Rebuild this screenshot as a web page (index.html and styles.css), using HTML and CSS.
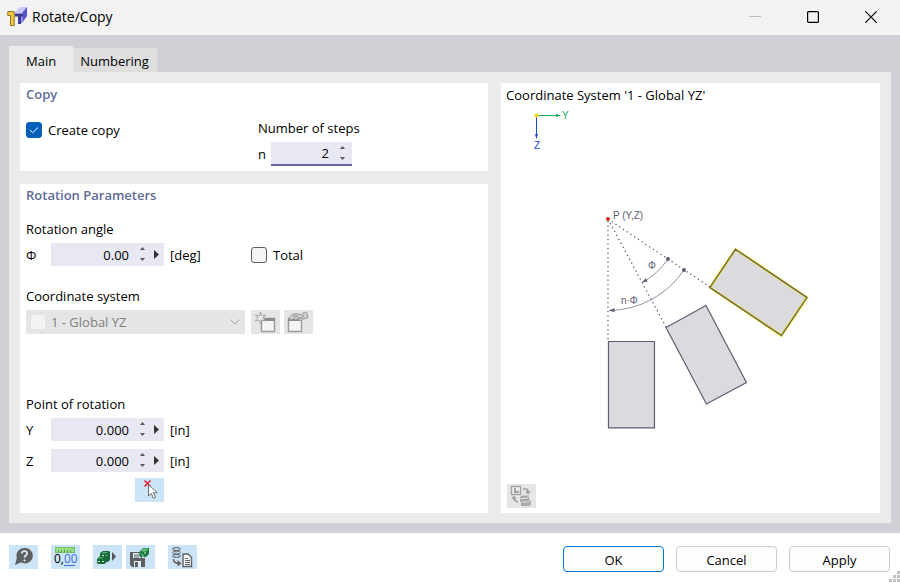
FILE: index.html
```
<!DOCTYPE html>
<html lang="en">
<head>
  <meta charset="UTF-8" />
  <title>Rotate/Copy</title>
  <meta name="viewport" content="width=device-width, initial-scale=1.0" />
  <link rel="stylesheet" href="styles.css">
</head>

<body>

  <header class="titlebar">
    <svg class="app-icon" viewBox="0 0 20 20" aria-hidden="true">
      <path d="M7 6l6-6h7l-4 6z" fill="#c9cbfa"/>
      <path d="M15 6l5-6v9l-5 7z" fill="#5353c8"/>
      <path d="M8 6h8v9l-3 2V9H8z" fill="#8f90f2"/>
      <path d="M8 7h8v2.500h-2V17h-3V9.500H8z" fill="#3c3c90"/>
      <path d="M.8 4.500h6.400V18.500H3.500V8.500H.8z" fill="#f3c83b" stroke="#8c762b"/>
    </svg>
    <h1 class="title">Rotate/Copy</h1>
    <div class="window-buttons">
      <button class="win-btn" aria-label="Minimize" disabled>
        <svg viewBox="0 0 12 12"><path d="M0 5.500h12" stroke="#bdbdbd"/></svg>
      </button>
      <button class="win-btn" aria-label="Maximize">
        <svg viewBox="0 0 12 12"><rect x=".6" y=".6" width="10.800" height="10.800" rx="1" fill="none" stroke="#000" stroke-width="1.200"/></svg>
      </button>
      <button class="win-btn" aria-label="Close">
        <svg viewBox="0 0 12 12"><path d="M.3.3l11.400 11.400M11.700.3L.3 11.700" stroke="#000" stroke-width="1.200"/></svg>
      </button>
    </div>
  </header>

  <main class="workspace">
    <div class="tabs" role="tablist">
      <button class="tab active" role="tab" aria-selected="true">Main</button>
      <button class="tab" role="tab" aria-selected="false">Numbering</button>
    </div>

    <div class="page" role="tabpanel">
      <div class="settings">

        <section class="panel">
          <h2 class="panel-title">Copy</h2>
          <div class="copy-row">
            <label class="check"><input type="checkbox" checked> Create copy</label>
            <div class="steps">
              <label class="caption" for="steps">Number of steps</label>
              <div class="line">
                <span class="symbol narrow">n</span>
                <div class="field short focused">
                  <input id="steps" type="text" inputmode="numeric" value="2">
                  <span class="spinner">
                    <button aria-label="More steps"><svg viewBox="0 0 5 3"><path d="M0 3L2.500 0 5 3z"/></svg></button>
                    <button aria-label="Fewer steps"><svg viewBox="0 0 5 3"><path d="M0 0l2.500 3L5 0z"/></svg></button>
                  </span>
                </div>
              </div>
            </div>
          </div>
        </section>

        <section class="panel grow">
          <h2 class="panel-title">Rotation Parameters</h2>

          <div class="group">
            <label class="caption" for="angle">Rotation angle</label>
            <div class="line">
              <span class="symbol">Φ</span>
              <div class="field">
                <input id="angle" type="text" inputmode="decimal" value="0.00">
                <span class="spinner">
                  <button aria-label="Increase angle"><svg viewBox="0 0 5 3"><path d="M0 3L2.500 0 5 3z"/></svg></button>
                  <button aria-label="Decrease angle"><svg viewBox="0 0 5 3"><path d="M0 0l2.500 3L5 0z"/></svg></button>
                </span>
                <button class="more" aria-label="Angle options"><svg viewBox="0 0 5 9"><path d="M0 0l5 4.500L0 9z"/></svg></button>
              </div>
              <span class="unit">[deg]</span>
              <label class="check"><input type="checkbox"> Total</label>
            </div>
          </div>

          <div class="group">
            <label class="caption" for="system">Coordinate system</label>
            <div class="line">
              <div class="combo">
                <span class="swatch"></span>
                <select id="system" disabled>
                  <option>1 - Global YZ</option>
                </select>
                <svg class="chevron" viewBox="0 0 10 6" aria-hidden="true"><path d="M.5.5L5 5 9.500.5" fill="none" stroke="#a3a3a3"/></svg>
              </div>
              <button class="tool off" aria-label="New coordinate system" disabled>
                <svg viewBox="0 0 29 24">
                  <rect x="10.500" y="8.500" width="13" height="13" fill="#f4f4f4" stroke="#999" stroke-width="1.400"/>
                  <path d="M10 8h14v3H10z" fill="#8c8c8c"/>
                  <path d="M9.500 2l1.200 4 4-1-2.700 3 2.700 3-4-1-1.200 4-1.200-4-4 1L7 8 4.300 5l4 1z" fill="#e9e9e9" stroke="#999" stroke-width=".8"/>
                </svg>
              </button>
              <button class="tool off" aria-label="Edit coordinate system" disabled>
                <svg viewBox="0 0 29 24">
                  <rect x="4.500" y="8.500" width="13" height="13" fill="#f4f4f4" stroke="#999" stroke-width="1.400"/>
                  <path d="M4 8h14v3H4z" fill="#8c8c8c"/>
                  <path d="M5 9c1-4 5-6 9-5l4 1 2-3 3 1 1 5-5 1-2 2-3-2-3 1-1-2-2 2z" fill="#cfcfcf" stroke="#999"/>
                  <path d="M9 6h5M13 8h5l2-3" fill="none" stroke="#8c8c8c"/>
                </svg>
              </button>
            </div>
          </div>

          <div class="group point">
            <h3 class="caption">Point of rotation</h3>
            <div class="line">
              <label class="symbol" for="point-y">Y</label>
              <div class="field">
                <input id="point-y" type="text" inputmode="decimal" value="0.000">
                <span class="spinner">
                  <button aria-label="Increase Y"><svg viewBox="0 0 5 3"><path d="M0 3L2.500 0 5 3z"/></svg></button>
                  <button aria-label="Decrease Y"><svg viewBox="0 0 5 3"><path d="M0 0l2.500 3L5 0z"/></svg></button>
                </span>
                <button class="more" aria-label="Y options"><svg viewBox="0 0 5 9"><path d="M0 0l5 4.500L0 9z"/></svg></button>
              </div>
              <span class="unit">[in]</span>
            </div>
            <div class="line second">
              <label class="symbol" for="point-z">Z</label>
              <div class="field">
                <input id="point-z" type="text" inputmode="decimal" value="0.000">
                <span class="spinner">
                  <button aria-label="Increase Z"><svg viewBox="0 0 5 3"><path d="M0 3L2.500 0 5 3z"/></svg></button>
                  <button aria-label="Decrease Z"><svg viewBox="0 0 5 3"><path d="M0 0l2.500 3L5 0z"/></svg></button>
                </span>
                <button class="more" aria-label="Z options"><svg viewBox="0 0 5 9"><path d="M0 0l5 4.500L0 9z"/></svg></button>
              </div>
              <span class="unit">[in]</span>
            </div>
            <div class="pick">
              <button class="tool" aria-label="Pick point in view">
                <svg viewBox="0 0 29 24">
                  <path d="M9.500 2.500l6 6M15.500 2.500l-6 6" stroke="#e8192c" stroke-width="1.500"/>
                  <path d="M13.500 6.500v11.500l2.800-2.500 2 4.800 2.200-1-2-4.600h3.700z" fill="#fff" stroke="#5f5f5f" stroke-width=".9"/>
                </svg>
              </button>
            </div>
          </div>
        </section>
      </div>

      <section class="panel preview">
        <h2 class="preview-title">Coordinate System '1 - Global YZ'</h2>

        <svg class="diagram" viewBox="0 1 379 377" role="img" aria-label="Object rotated around point P in n steps">
          <!-- axes -->
          <g stroke-width="1">
            <path d="M36 9.500h19" stroke="#12a85a"/>
            <path d="M55 8l5 1.500-5 1.500z" fill="#12a85a"/>
            <path d="M35.500 10v18" stroke="#1c46c8"/>
            <path d="M34 28l1.500 5 1.500-5z" fill="#1c46c8"/>
          </g>
          <circle cx="35.500" cy="9.500" r="2" fill="#f7d800"/>
          <text class="axis" x="61" y="13" fill="#12a85a">Y</text>
          <text class="axis" x="33" y="43" fill="#1c46c8">Z</text>

          <!-- bodies -->
          <g fill="#dbdbdf" stroke="#5d5b70" stroke-width="1.200">
            <path d="M107.500 235.500h46v86.500h-46z"/>
            <path d="M165 221.500l40-22 40.500 77-40 21.500z"/>
            <path d="M209 181.500l25.500-38.200 71.500 48.200-25.500 38z" stroke="#f4e000" stroke-width="2.400"/>
            <path d="M209 181.500l25.500-38.200 71.500 48.200-25.500 38z" fill="none"/>
          </g>

          <!-- rays from the rotation point -->
          <g fill="none" stroke="#5d5b70" stroke-width="1.300" stroke-dasharray="1.300 3.200">
            <path d="M107 115v120"/>
            <path d="M107 113l58 108"/>
            <path d="M107 113l102 68"/>
          </g>

          <!-- angle arcs -->
          <g fill="none" stroke="#77758a" stroke-width=".8">
            <path d="M167 153A72 72 0 0 1 141 176.500"/>
            <path d="M183 164A91.500 91.500 0 0 1 108 204.500"/>
          </g>
          <g fill="#5d5b70">
            <path d="M141 176.500l3.800-4.300 1.900 3.400z"/>
            <path d="M108 204.500l5.500-2.300v4z"/>
            <circle cx="167" cy="153" r="2"/>
            <circle cx="183" cy="164" r="2"/>
          </g>
          <circle cx="107" cy="113" r="2" fill="#c62b1c"/>
          <g class="mark">
            <text x="112" y="113">P (Y,Z)</text>
            <text x="147" y="163">Φ</text>
            <text x="120" y="198">n·Φ</text>
          </g>
        </svg>

        <div>
          <button class="tool off" aria-label="Switch picture" disabled>
            <svg viewBox="0 0 29 24">
              <rect x="4.500" y="2.500" width="9" height="8" fill="#eee" stroke="#a2a2a2" stroke-width="1.400"/>
              <path d="M7 4h2v3h3v2H7z" fill="#a2a2a2"/>
              <path d="M16 5h3q2 0 2 3M7 14q0 3 4 4" fill="none" stroke="#a2a2a2" stroke-width="1.600"/>
              <path d="M18 7h6l-3 3.500zM4 15l3-3.500L10 15z" fill="#a2a2a2"/>
              <path d="M13 13l2-1.500h7v4l2 1v4l-2 1.500h-8v-4h-1z" fill="#aaa"/>
              <path d="M13.500 14.500h6l2-2M14.500 18h7l2-2" fill="none" stroke="#e5e5e5"/>
            </svg>
          </button>
        </div>
      </section>
    </div>
  </main>

  <footer class="footer">
    <div class="tools">
      <button class="tool" aria-label="Help">
        <svg viewBox="0 0 29 24">
          <path d="M15.500 3a7.700 7.700 0 1 1-3.300 14.300L6 20l1.800-7A7.700 7.700 0 0 1 15.500 3z" fill="#5f5f5f"/>
          <path d="M12.800 8.500q.2-2.300 2.700-2.300t2.500 2.200q0 1.300-1.400 2.200-1.100.8-1.100 2.200" fill="none" stroke="#d5e8f8" stroke-width="1.800"/>
          <circle cx="15.500" cy="15.300" r="1.100" fill="#d5e8f8"/>
        </svg>
      </button>
      <button class="tool" aria-label="Units and decimal places">
        <svg viewBox="0 0 29 24">
          <rect x="4.500" y="2.500" width="19" height="5" fill="#97df87" stroke="#76bd69"/>
          <path d="M7.500 5v2M10.500 5v2M13.500 5v2M16.500 5v2M19.500 5v2" stroke="#5b9e50"/>
          <text class="digits" x="3" y="18">0,<tspan fill="#3c6fe0">00</tspan></text>
          <path d="M13 20.500h11" stroke="#3c6fe0"/>
        </svg>
      </button>
      <span class="pair">
        <button class="tool" aria-label="Load settings">
          <svg viewBox="0 0 29 24">
            <path d="M4 14l3-3V8l3-2h6l1 1v8l-2 2h-2v1l-2 1H5l-1-1z" fill="#186b36"/>
            <path d="M8 8.500L10 7h5l-2 1.500zM5 13.500L7 12h4l-2 1.500z" fill="#4fb16c"/>
            <path d="M9 10.500h2M13 10.500h1M5 16.500h2M9 16.500h2" stroke="#d5efd9"/>
            <path d="M19 7l4 4.500-4 4.500z" fill="#555"/>
          </svg>
        </button>
        <button class="tool" aria-label="Save settings">
          <svg viewBox="0 0 29 24">
            <path d="M4 7h12v6h3v9H6l-2-2z" fill="#5f5f5f"/>
            <path d="M7 8h8v5H7zM8 16h7v6H8z" fill="#e4f0fa"/>
            <path d="M8 10h6M8 12h5" stroke="#5f5f5f"/>
            <path d="M9 17h3v5H9z" fill="#5f5f5f"/>
            <path d="M14 6l3-3h6v6l-3 3h-6l-1-3z" fill="#187a3b"/>
            <path d="M15 6l2-2h5l-2 2zM14 9h3" fill="#62bd79" stroke="#62bd79"/>
            <path d="M18 8h2M16 11h2" stroke="#c9ecd2"/>
          </svg>
        </button>
      </span>
      <button class="tool" aria-label="Copy from database">
        <svg viewBox="0 0 29 24">
          <g fill="#bdd4e8" stroke="#5f5f5f">
            <ellipse cx="8.500" cy="11" rx="4" ry="1.500"/>
            <ellipse cx="8.500" cy="7.500" rx="4" ry="1.500"/>
            <ellipse cx="8.500" cy="4" rx="4" ry="1.500"/>
          </g>
          <path d="M5.500 14q0 4 5 4.500" fill="none" stroke="#5f5f5f" stroke-width="1.500"/>
          <path d="M9.500 15l4 3.500-4 3z" fill="#5f5f5f"/>
          <path d="M15 9h5l3.500 3.500v9H15z" fill="#fff" stroke="#5f5f5f" stroke-width="1.400"/>
          <path d="M17 13.500h3M17 15.500h5M17 17.500h5M17 19.500h5" stroke="#5f5f5f"/>
        </svg>
      </button>
    </div>
    <div class="actions">
      <button class="btn primary">OK</button>
      <button class="btn">Cancel</button>
      <button class="btn">Apply</button>
    </div>
    <svg class="grip" viewBox="0 0 11 11" aria-hidden="true">
      <path d="M8 0h3v3H8zM4 4h3v3H4zM8 4h3v3H8zM0 8h3v3H0zM4 8h3v3H4zM8 8h3v3H8z" fill="#bfbfbf"/>
    </svg>
  </footer>

</body>
</html>
```
FILE: styles.css
```
* {
  box-sizing: border-box;
  margin: 0;
  padding: 0;
}

body {
  background: #fff;
  color: #000;
  font: 13px/20px "Open Sans", "Noto Sans", sans-serif;
  display: flex;
  flex-direction: column;
  min-height: 100vh;
}

button,
input,
select {
  font: inherit;
  color: inherit;
  border: none;
  background: none;
}

svg {
  display: block;
}

/* Title bar */
.titlebar {
  display: flex;
  align-items: center;
  height: 35px;
  padding: 0 0 2px 7px;
  background: #f2f2f2;
}

.app-icon {
  width: 20px;
  height: 20px;
  margin-right: 5px;
}

.title {
  font-size: 14px;
  font-weight: 400;
  flex: 1;
}

.window-buttons {
  display: flex;
}

.win-btn {
  width: 58px;
  height: 32px;
  display: flex;
  align-items: center;
  justify-content: center;
}

.win-btn svg {
  width: 12px;
  height: 12px;
}

/* Tabs */
.workspace {
  flex: 1;
  display: flex;
  flex-direction: column;
  padding: 11px 9px 10px;
  background: #d1d0d6;
}

.tabs {
  display: flex;
  align-items: flex-end;
  height: 26px;
}

.tab {
  height: 24px;
  padding: 2px 8px 0 7px;
  background: #dedede;
}

.tab.active {
  height: 26px;
  padding: 4px 17px 0;
  background: #ebebeb;
}

.page {
  flex: 1;
  display: grid;
  grid-template-columns: 21fr 17fr;
  gap: 13px;
  padding: 11px 11px 10px;
  background: #ebebeb;
}

.settings {
  display: flex;
  flex-direction: column;
  gap: 13px;
}

.panel {
  padding: 0 6px 5px;
  background: #fff;
}

.panel.grow {
  flex: 1;
}

.panel-title {
  margin-bottom: 13px;
  font-size: 13px;
  font-weight: 600;
  line-height: 22px;
  color: #5f6b96;
}

.copy-row {
  display: grid;
  grid-template-columns: 232px 1fr;
}

.caption {
  display: block;
  margin-bottom: 4px;
  font-size: 13px;
  font-weight: 400;
}

.group {
  margin-bottom: 20px;
}

.group.point {
  margin: 60px 0 0;
}

.line {
  display: flex;
  align-items: center;
}

.line.second {
  margin-top: 8px;
}

.symbol {
  width: 25px;
}

.symbol.narrow {
  width: 13px;
}

.unit {
  width: 81px;
  margin-left: 6px;
}

/* Checkboxes */
.check {
  display: flex;
  align-items: center;
  gap: 6px;
  height: 23px;
}

.check input {
  appearance: none;
  width: 16px;
  height: 16px;
  border: 1px solid #5c5c5c;
  border-radius: 3px;
  background: #f4f4f4;
}

.check input:checked {
  border-color: #005fb8;
  background: #005fb8 url("data:image/svg+xml,%3Csvg xmlns='http://www.w3.org/2000/svg' viewBox='0 0 14 14'%3E%3Cpath d='M3 7l2.700 2.700L11 4.500' fill='none' stroke='white'/%3E%3C/svg%3E") center / 14px;
}

/* Number fields */
.field {
  display: flex;
  width: 113px;
  height: 23px;
  background: #e8e8f2;
}

.field.short {
  width: 81px;
  height: 24px;
}

.field.focused {
  border-bottom: 2px solid #6264a7;
}

.field input {
  flex: 1;
  min-width: 0;
  padding-right: 3px;
  text-align: right;
}

.spinner {
  width: 20px;
  display: flex;
  flex-direction: column;
  align-items: center;
  justify-content: center;
  gap: 3px;
}

.spinner button {
  height: 8px;
  padding: 2px 4px 3px;
}

.spinner svg {
  width: 5px;
  height: 3px;
  fill: #555;
}

.more {
  width: 12px;
  padding-left: 2px;
}

.more svg {
  width: 5px;
  height: 9px;
  fill: #333;
}

/* Coordinate system list */
.combo {
  display: flex;
  align-items: center;
  width: 219px;
  height: 24px;
  margin-right: 6px;
  padding: 0 5px;
  background: #e5e5e5;
}

.swatch {
  width: 14px;
  height: 14px;
  margin-right: 6px;
  background: #f3f3f3;
}

.combo select {
  appearance: none;
  flex: 1;
  color: #808080;
  opacity: 1;
}

.chevron {
  width: 10px;
  height: 6px;
}

/* Icon buttons */
.tool {
  width: 29px;
  height: 24px;
  background: #cce4f7;
}

.tool svg {
  width: 29px;
  height: 24px;
}

.tool.off {
  background: #e5e5e5;
}

.tool.off + .tool.off {
  margin-left: 4px;
}

.pick {
  display: flex;
  padding: 6px 0 0 109px;
}

/* Preview */
.preview {
  display: flex;
  flex-direction: column;
  padding: 0;
}

.preview-title {
  padding-left: 5px;
  font-size: 13px;
  font-weight: 400;
  line-height: 24px;
}

.diagram {
  width: 100%;
  flex: 1;
  min-height: 0;
  font-family: "Liberation Sans", Arial, sans-serif;
}

.diagram .axis {
  font-size: 10px;
}

.diagram .mark {
  font-size: 10px;
  fill: #5d5b70;
}

.preview .tool {
  display: block;
  margin: 0 0 5px 6px;
}

/* Footer */
.footer {
  position: relative;
  display: flex;
  justify-content: space-between;
  padding: 12px 10px 10px 9px;
}

.tools {
  display: flex;
  align-items: flex-start;
  gap: 13px;
}

.pair {
  display: flex;
  gap: 4px;
}

.digits {
  font: 12px "Open Sans", sans-serif;
}

.actions {
  display: flex;
  gap: 12px;
  padding-top: 1px;
}

.btn {
  width: 101px;
  height: 26px;
  padding-top: 2px;
  border: 1px solid #ccc;
  border-radius: 4px;
  background: #fdfdfd;
}

.btn.primary {
  border-color: #0078d4;
}

.grip {
  position: absolute;
  right: 0;
  bottom: 0;
  width: 11px;
  height: 11px;
}
```
